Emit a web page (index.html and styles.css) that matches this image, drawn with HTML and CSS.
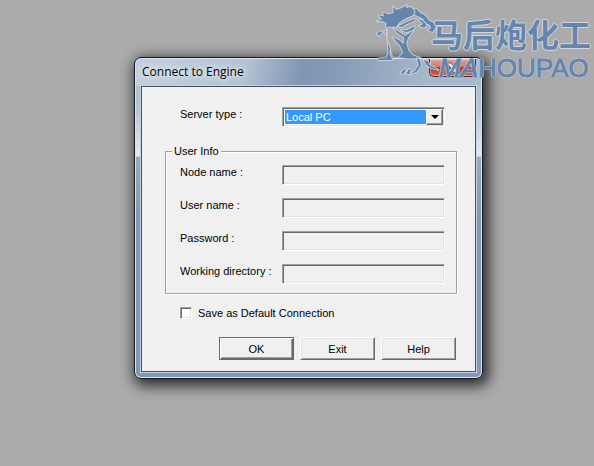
FILE: index.html
```html
<!DOCTYPE html>
<html lang="en">

<head>
  <meta charset="utf-8">
  <title>Connect to Engine</title>
  <link rel="stylesheet" href="styles.css">
</head>

<body>

  <form class="window">
    <header class="titlebar">
      <h1 class="title">Connect to Engine</h1>
      <button type="button" class="close" aria-label="Close">
        <svg width="14" height="12" viewBox="0 0 14 12">
          <path d="M1 1h4l2 2.500L9 1h4L9.200 6l3.800 5H9L7 8.500 5 11H1l3.800-5z" fill="#fff" stroke="#4c5a78" />
        </svg>
      </button>
    </header>

    <div class="client">
      <div class="fields server">
        <label for="server">Server type :</label>
        <div class="combo">
          <select id="server">
            <option>Local PC</option>
          </select>
          <span class="arrow"></span>
        </div>
      </div>

      <fieldset class="group">
        <legend>User Info</legend>
        <div class="fields">
          <label for="node">Node name :</label>
          <input type="text" id="node" disabled>
          <label for="user">User name :</label>
          <input type="text" id="user" disabled>
          <label for="password">Password :</label>
          <input type="password" id="password" disabled>
          <label for="directory">Working directory :</label>
          <input type="text" id="directory" disabled>
        </div>
      </fieldset>

      <div class="save">
        <input type="checkbox" id="save">
        <label for="save">Save as Default Connection</label>
      </div>

      <div class="buttons">
        <button type="submit" class="default">OK</button>
        <button type="button">Exit</button>
        <button type="button">Help</button>
      </div>
    </div>
  </form>

  <div class="brand">
    <svg class="horse" width="80" height="80" viewBox="0 0 240 240">
      <g fill="#6284ad" stroke="#d3dae6" stroke-width="5" stroke-linejoin="round" paint-order="stroke">
        <!-- mane -->
        <path d="M44 80L47 70 36 64 18 64 33 57 22 46 38 49 37 36 50 43 68 39 66 20 76 29 92 24 108 15 104 24 118 21 132 32 134 43 112 52 96 59 84 68 76 80z" />
        <!-- head -->
        <path d="M129 44L134 38 129 28 137 27 147 38 162 46 175 62 190 70 194 84 184 96 170 91 180 85 177 76 164 69 154 55 139 48z" />
        <path d="M142 61L152 60 162 68 167 78 158 83 143 77 153 75 155 69z" />
        <path d="M81 79L108 65 134 56 132 62 108 72 92 82z" />
        <!-- fist -->
        <path d="M18 101L25 94 36 96 29 101 25 108zM41 95L46 90 45 104z" />
        <!-- body -->
        <path d="M90 91L106 91 132 78 127 90 106 97z" />
        <path d="M66 84L84 96 103 107 128 91 111 114 106 128 112 151 124 165 149 174 117 176 83 172 96 159 88 138 64 112 85 121 98 132 99 112 82 102z" />
        <path d="M50 125L57 145 56 165 65 180 24 181 19 176 47 172 52 158z" />
        <path d="M48 84V122M57 148L65 172 80 172" fill="none" stroke-width="3" />
        <!-- legs -->
        <path d="M137 175L145 178 151 194 137 216 117 222 133 211 143 195zM88 220L100 207 106 209 98 221zM105 221L114 207 120 211 116 223z" />
        <path d="M158 180L171 184 176 195 195 205 202 210 190 207 176 202 166 194z" />
      </g>
    </svg>
    <div class="wordmark">
      <div class="cn" lang="zh">马后炮化工</div>
      <div class="latin"><i>MA</i>HOUPAO</div>
    </div>
  </div>

</body>

</html>
```
FILE: styles.css
```css
* {
  box-sizing: border-box;
}

body {
  margin: 0;
  min-height: 100vh;
  padding: 57px 111px 24px 134px;
  background-color: #ababab;
  font-family: "Liberation Sans", Arial, sans-serif;
  font-size: 11px;
  line-height: 14px;
  color: #000;
}

/*********** Window frame ***********/

.window {
  padding: 1px 6px 6px;
  border: 1px solid #14171c;
  border-radius: 7px;
  background:
    linear-gradient(100deg, #c3d0df 0, #b3c2d3 32%, #8096b3 48%, #8399b5 56%, #a8b9cb 85%) 0 0 / 100% 28px no-repeat,
    linear-gradient(#a8b9cb 0, #b5c4d4 50px, #e6ebf1 98px, #98abc1 99px, #8199b4 160px);
  box-shadow: inset 0 0 0 1px #dce6f0, 3px 4px 14px 3px rgba(0, 0, 0, 0.75);
}

.titlebar {
  display: flex;
  justify-content: space-between;
  height: 27px;
}

.title {
  margin: 0;
  padding-left: 1px;
  font-family: "Open Sans", "Segoe UI", sans-serif;
  font-size: 12px;
  font-weight: normal;
  line-height: 26px;
  text-shadow: 0 0 6px #fff, 0 0 10px #fff;
}

.close {
  display: flex;
  justify-content: center;
  align-items: center;
  width: 47px;
  height: 18px;
  padding: 0;
  border: 1px solid #4b2a30;
  border-top: 0;
  border-radius: 0 0 5px 5px;
  background: linear-gradient(#dfa49b, #cf7869 45%, #b33a26 50%, #cf6a50);
  box-shadow: inset 0 0 0 1px rgba(255, 255, 255, 0.4);
}

.client {
  padding: 20px 18px 11px 23px;
  border: 1px solid #46525f;
  background-color: #f0f0f0;
  box-shadow: 0 0 0 1px #c5d3e0;
}

/*********** Fields ***********/

.fields {
  display: grid;
  grid-template-columns: 102px 1fr;
  row-gap: 13px;
}

.server {
  margin: 0 12px 17px 15px;
}

.combo,
input[type='text'],
input[type='password'],
input[type='checkbox'] {
  border: 1px solid;
  border-color: #a0a0a0 #fff #fff #a0a0a0;
  border-radius: 0;
  box-shadow: inset 1px 1px #696969, inset -1px -1px #e3e3e3;
}

input[type='text'],
input[type='password'] {
  width: 100%;
  height: 20px;
  padding: 2px 4px;
  background-color: #f0f0f0;
  font: inherit;
}

.combo {
  display: grid;
  height: 20px;
  padding: 1px;
  background-color: #fff;
}

.combo select,
.arrow {
  grid-area: 1 / 1;
}

.combo select {
  appearance: none;
  margin: 1px 17px 1px 1px;
  padding: 0 1px;
  border: 0;
  border-radius: 0;
  background-color: #3399ff;
  font: inherit;
  color: #fff;
}

.arrow {
  display: grid;
  place-items: center;
  justify-self: end;
  width: 17px;
  border: 1px solid;
  border-color: #fff #696969 #696969 #fff;
  background-color: #f0f0f0;
  box-shadow: inset -1px -1px #a0a0a0;
  pointer-events: none;
}

.arrow::after {
  content: "";
  border: 4px solid transparent;
  border-top-color: #000;
  border-bottom: 0;
}

/* etched group box */
.group {
  min-width: 0;
  margin: 0;
  padding: 7px 11px 9px 14px;
  border: 1px solid #a0a0a0;
  box-shadow: 1px 1px #fff, inset 1px 1px #fff;
}

.group legend {
  margin-left: -8px;
  padding: 0 2px;
  background-color: #f0f0f0;
}

.save {
  display: flex;
  align-items: center;
  gap: 6px;
  margin: 12px 0 17px 15px;
}

input[type='checkbox'] {
  appearance: none;
  width: 12px;
  height: 12px;
  margin: 0;
  background-color: #fff;
}

input[type='checkbox']:checked {
  background-image: linear-gradient(45deg, transparent 40%, #000 40%, #000 60%, transparent 60%);
}

/*********** Buttons ***********/

.buttons {
  display: flex;
  justify-content: flex-end;
  gap: 6px;
  margin-right: 1px;
}

.buttons button {
  width: 75px;
  height: 23px;
  padding: 0;
  border: 1px solid;
  border-color: #fff #696969 #696969 #fff;
  background-color: #f0f0f0;
  box-shadow: inset 1px 1px #e3e3e3, inset -1px -1px #a0a0a0;
  font: inherit;
  color: #000;
}

.buttons .default {
  border-color: #696969;
  box-shadow: inset 1px 1px #fff, inset -1px -1px #696969, inset -2px -2px #a0a0a0;
}

/*********** Brand overlay ***********/

.brand {
  position: absolute;
  top: 0;
  right: 3px;
  display: flex;
  color: #6284ad;
  opacity: 0.95;
  pointer-events: none;
}

.horse {
  margin-right: -20px;
}

.wordmark {
  padding-top: 18px;
  text-shadow: 1px 0 #d3dae6, -1px 0 #d3dae6, 0 1px #d3dae6, 0 -1px #d3dae6;
}

.cn {
  font-family: "Liberation Sans", "Noto Sans CJK SC", sans-serif;
  font-size: 32px;
  font-weight: bold;
  line-height: 36px;
}

.latin {
  padding-left: 8px;
  font-family: "Liberation Sans", Arial, sans-serif;
  font-size: 26px;
  line-height: 28px;
  -webkit-text-stroke: 1px #6284ad;
}
```
